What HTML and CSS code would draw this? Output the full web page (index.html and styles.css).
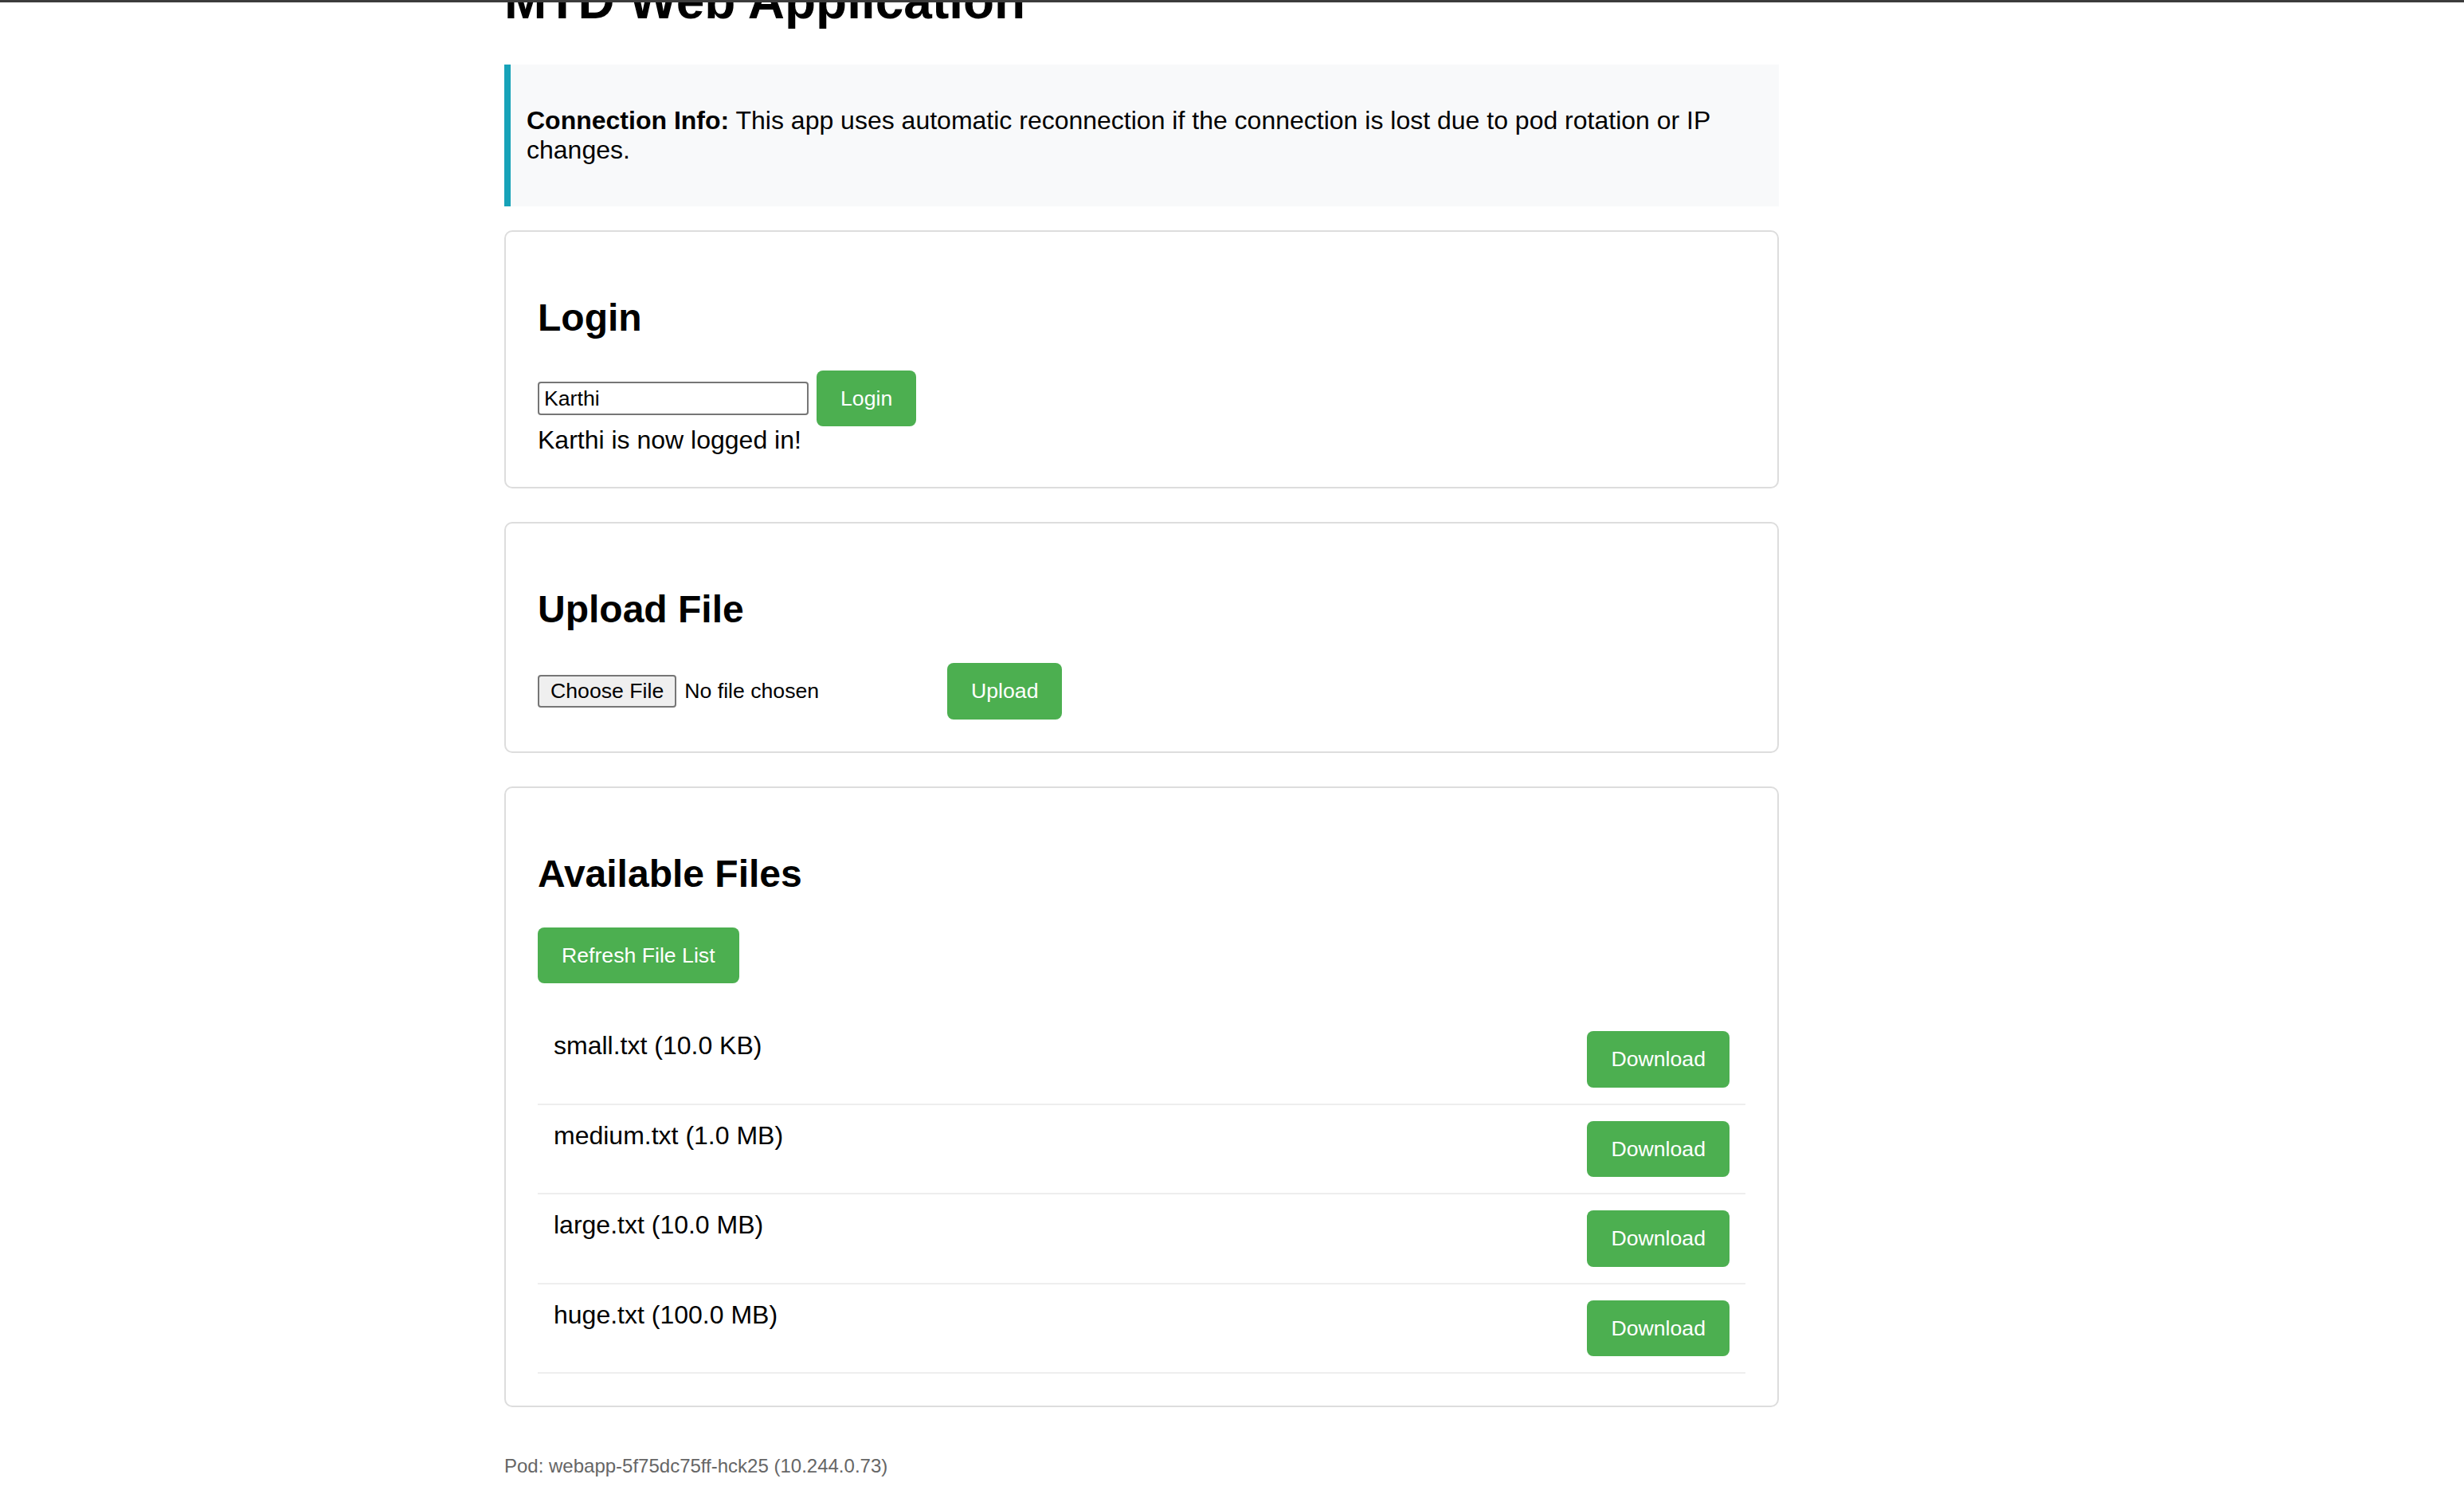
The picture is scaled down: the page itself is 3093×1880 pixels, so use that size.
FILE: index.html
```html
<!DOCTYPE html>
<html lang="en">
<head>
<meta charset="utf-8">
<title>MTD Web Application</title>
<link rel="stylesheet" href="styles.css">
</head>
<body>
<div class="topline"></div>
<main class="page">
  <h1 class="title">MTD Web Application</h1>

  <div class="info">
    <p><strong>Connection Info:</strong> This app uses automatic reconnection if the connection is lost due to pod rotation or IP changes.</p>
  </div>

  <section class="card">
    <h2 class="card-title">Login</h2>
    <div class="row row-login">
      <input class="text-input" type="text" value="Karthi">
      <button class="btn" type="button">Login</button>
    </div>
    <div class="message">Karthi is now logged in!</div>
  </section>

  <section class="card">
    <h2 class="card-title">Upload File</h2>
    <div class="row row-upload">
      <div class="file-input">
        <span class="file-btn">Choose File</span>
        <span class="file-label">No file chosen</span>
      </div>
      <button class="btn" type="button">Upload</button>
    </div>
  </section>

  <section class="card">
    <h2 class="card-title">Available Files</h2>
    <button class="btn btn-block" type="button">Refresh File List</button>
    <div class="file-list">
      <div class="file-item">
        <span class="file-name">small.txt (10.0 KB)</span>
        <button class="btn" type="button">Download</button>
      </div>
      <div class="file-item">
        <span class="file-name">medium.txt (1.0 MB)</span>
        <button class="btn" type="button">Download</button>
      </div>
      <div class="file-item">
        <span class="file-name">large.txt (10.0 MB)</span>
        <button class="btn" type="button">Download</button>
      </div>
      <div class="file-item">
        <span class="file-name">huge.txt (100.0 MB)</span>
        <button class="btn" type="button">Download</button>
      </div>
    </div>
  </section>

  <footer class="pod">Pod: webapp-5f75dc75ff-hck25 (10.244.0.73)</footer>
</main>
</body>
</html>
```

FILE: styles.css
```css
html, body {
  margin: 0;
  padding: 0;
  background: #ffffff;
}

body {
  font-family: "Liberation Sans", Arial, sans-serif;
  font-size: 32px;
  line-height: normal;
  color: #000000;
}

.topline {
  position: fixed;
  top: 0;
  left: 0;
  right: 0;
  height: 3px;
  background: #3c3c3c;
  z-index: 10;
}

.page {
  width: 1600px;
  margin: -36px 0 0 633px;
  padding-bottom: 40px;
}

.title {
  font-size: 64px;
  font-weight: bold;
  margin: 0 0 43px;
}

.info {
  background: #f8f9fa;
  border-left: 8px solid #17a2b8;
  padding: 20px;
  margin: 30px 0;
}

.info p {
  margin: 32px 0;
}

.card {
  border: 2px solid #dddddd;
  border-radius: 10px;
  padding: 40px;
  margin: 0 0 42px;
}

.card-title {
  font-size: 48px;
  font-weight: bold;
  margin: 40px 0;
}

.row {
  display: flex;
  align-items: center;
  gap: 10px;
}

.row-login {
  height: 68px;
}

.row-upload {
  height: 70.5px;
}

.text-input {
  box-sizing: border-box;
  width: 340px;
  height: 42px;
  margin: 0;
  padding: 4px 6px;
  border: 2px solid #767676;
  border-radius: 4px;
  background: #ffffff;
  color: #000000;
  font-family: "Liberation Sans", Arial, sans-serif;
  font-size: 26.67px;
  outline: none;
}

.btn {
  background: #4caf50;
  color: #ffffff;
  border: none;
  border-radius: 8px;
  padding: 20px 30px;
  margin: 0;
  font-family: "Liberation Sans", Arial, sans-serif;
  font-size: 26.67px;
  line-height: 30.5px;
  cursor: pointer;
}

.btn-block {
  display: block;
}

.message {
  font-size: 32px;
}

.file-input {
  width: 504px;
  display: flex;
  align-items: center;
  font-size: 26.67px;
}

.file-btn {
  box-sizing: border-box;
  height: 41px;
  padding: 3px 14px;
  margin-right: 10px;
  background: #efefef;
  border: 2px solid #767676;
  border-radius: 4px;
  color: #000000;
  line-height: normal;
}

.file-label {
  color: #000000;
}

.file-list {
  margin-top: 40px;
}

.file-item {
  display: flex;
  justify-content: space-between;
  padding: 20px;
  border-bottom: 2px solid #eeeeee;
}

.file-name {
  font-size: 32px;
}

.pod {
  margin-top: 60px;
  font-size: 24px;
  color: #666666;
}
```
